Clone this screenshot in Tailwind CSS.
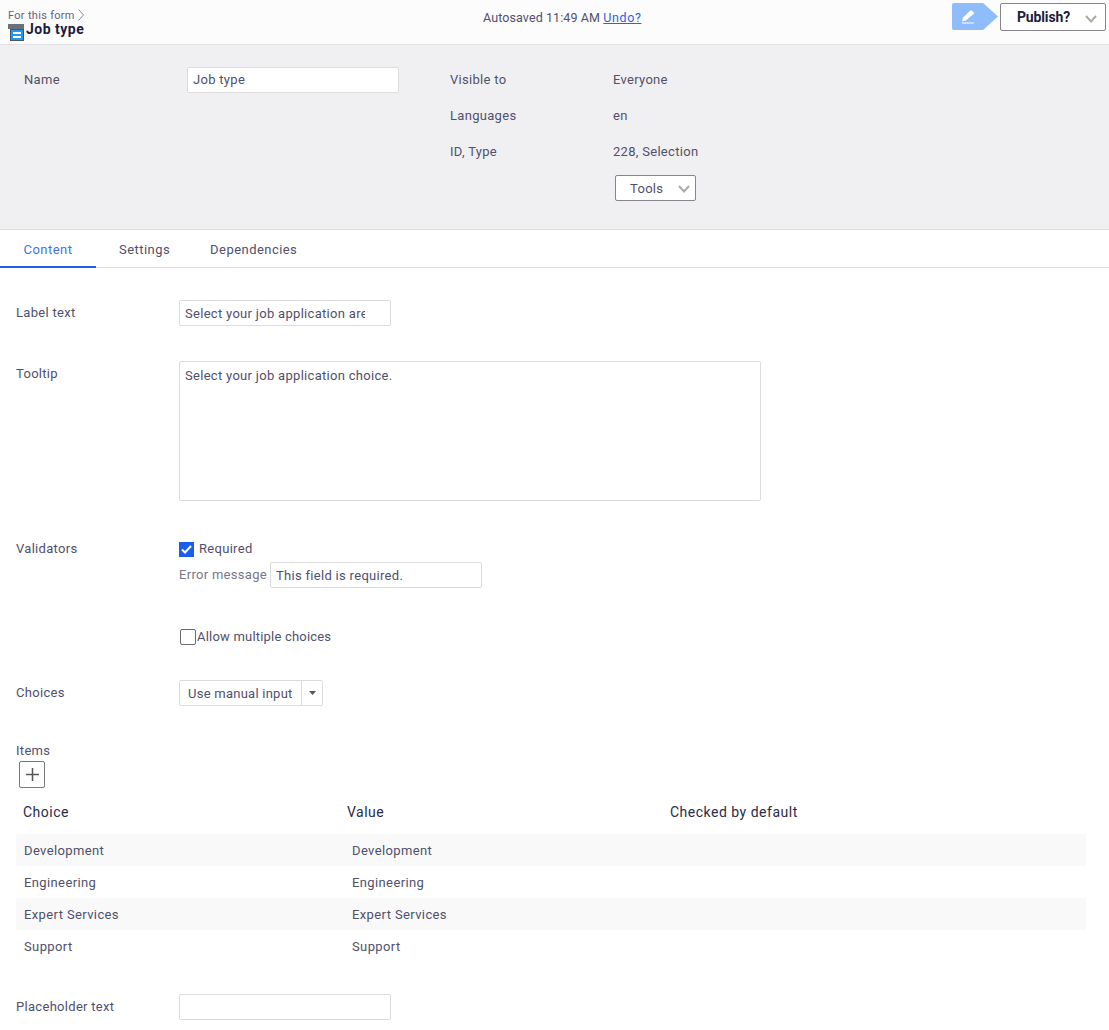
<!DOCTYPE html>
<html lang="en">
<head>
  <meta charset="UTF-8" />
  <title>Job type</title>
  <script src="https://cdn.jsdelivr.net/npm/@tailwindcss/browser@4"></script>
</head>
<body class="bg-white font-['Roboto',sans-serif] text-[13px] tracking-[0.3px] text-[#50506c] h-[1030px] overflow-hidden">

  <!-- top bar -->
  <div class="h-[45px] bg-[#fcfcfc] border-b border-[#e2e2e4] flex relative">
    <div class="pl-2 pt-[9px] w-[400px]">
      <div class="flex items-center h-[12px] text-[11px] text-[#63637a] leading-none">For this form
        <svg class="ml-[3px]" width="6" height="12" viewBox="0 0 6 12" fill="none" stroke="#8a8a96"><path d="M.5.5 5.500 6 .5 11.500"/></svg>
      </div>
      <div class="flex h-[19px] mt-[-1px]">
        <svg width="18" height="17" viewBox="0 0 18 17" class="mt-[4px] shrink-0">
          <rect x="0" y="0" width="16" height="5" fill="#6e7079"/>
          <rect x="2.500" y="5.500" width="13" height="11" fill="#2196f3" stroke="#4a5666"/>
          <rect x="5" y="8" width="8" height="2" fill="#fff"/>
          <rect x="5" y="12" width="8" height="2" fill="#fff"/>
        </svg>
        <span class="text-[14px] leading-[19px] font-bold text-[#1c1c3c] tracking-[0.5px]">Job type</span>
      </div>
    </div>
    <div class="absolute left-[483px] top-[10px] text-[12.5px] leading-[16px] tracking-[0.1px]">Autosaved 11:49 AM <a class="text-[#2b62e3] underline tracking-[0.6px]">Undo?</a></div>
    <div class="ml-auto flex items-start pt-[3px] pr-[3px]">
      <svg width="46" height="27" viewBox="0 0 46 27" class="mr-[2px]">
        <path d="M2 0H31L46 13.500 31 27H2a2 2 0 0 1-2-2V2a2 2 0 0 1 2-2Z" fill="#8fbcfb"/>
        <path d="M10 18.500l1-4 8-7.500 3.500 3-8.500 7.500Z" fill="#fff"/>
        <path d="M10 20H22" stroke="#fff" stroke-width="1"/>
      </svg>
      <div class="w-[106px] h-[28px] bg-white border border-[#85858b] rounded-[2px] flex items-center relative">
        <span class="ml-[16px] text-[14px] font-bold text-[#1c1c3c] tracking-[-0.15px]">Publish?</span>
        <svg class="absolute right-[8px] top-[11px]" width="12" height="8" viewBox="0 0 12 8" fill="none" stroke="#aaa" stroke-width="2"><path d="M1 1 6 6.500 11 1"/></svg>
      </div>
    </div>
  </div>

  <!-- properties -->
  <div class="h-[185px] bg-[#f0f0f2] border-b border-[#dedee0] relative flex">
    <div class="w-[450px] flex pl-[24px] pt-[22px]">
      <div class="w-[163px] h-[25px] leading-[25px]">Name</div>
      <div class="w-[212px] h-[26px] bg-white border border-[#dcdcdc] rounded-[2px] px-[5px] leading-[24px]">Job type</div>
    </div>
    <div class="pt-[17px]">
      <div class="flex h-[36px] items-center"><div class="w-[163px]">Visible to</div><div>Everyone</div></div>
      <div class="flex h-[36px] items-center"><div class="w-[163px]">Languages</div><div>en</div></div>
      <div class="flex h-[36px] items-center"><div class="w-[163px]">ID, Type</div><div>228, Selection</div></div>
      <div class="ml-[165px] mt-[5px] w-[81px] h-[26px] bg-white border border-[#85858b] rounded-[2px] flex items-center relative">
        <span class="ml-[14px] mt-[1px]">Tools</span>
        <svg class="absolute right-[5px] top-[9px]" width="12" height="8" viewBox="0 0 12 8" fill="none" stroke="#aaa" stroke-width="2"><path d="M1 1 6 6.500 11 1"/></svg>
      </div>
    </div>
  </div>

  <!-- tabs -->
  <div class="h-[38px] border-b border-[#dedee0] flex tracking-[0.45px]">
    <div class="w-[96px] h-[38px] border-b-2 border-[#1f5cf0] text-[#3f73ee] text-center leading-[39px]">Content</div>
    <div class="ml-[23px] leading-[39px]">Settings</div>
    <div class="ml-[40px] leading-[39px]">Dependencies</div>
  </div>

  <!-- form -->
  <div class="pl-[16px] pt-[32px]">
    <div class="flex h-[26px]">
      <div class="w-[163px] leading-[25px]">Label text</div>
      <div class="w-[212px] h-[26px] bg-white border border-[#dcdcdc] rounded-[2px] pl-[5px] pr-[25px] leading-[25px]">
        <div class="overflow-hidden whitespace-nowrap">Select your job application area</div>
      </div>
    </div>
    <div class="flex mt-[35px]">
      <div class="w-[163px] leading-[25px]">Tooltip</div>
      <div class="w-[582px] h-[140px] border border-[#dcdcdc] rounded-[2px] px-[5px] pt-[5px] leading-[18px]">Select your job application choice.</div>
    </div>
    <div class="flex mt-[38px]">
      <div class="w-[163px] leading-[20px]">Validators</div>
      <div>
        <div class="flex items-center h-[20px]">
          <div class="w-[15px] h-[15px] bg-[#1a5ef0] flex items-center justify-center">
            <svg width="11" height="9" viewBox="0 0 11 9" fill="none" stroke="#fff" stroke-width="2"><path d="M1 4.500 4 7.500 10 1"/></svg>
          </div>
          <span class="ml-[5px]">Required</span>
        </div>
        <div class="flex items-center mt-[3px] h-[26px]">
          <span class="text-[#77778a] w-[91px]">Error message</span>
          <div class="w-[212px] h-[26px] border border-[#dcdcdc] rounded-[2px] px-[5px] leading-[25px]">This field is required.</div>
        </div>
        <div class="flex items-center mt-[39px] h-[20px]">
          <div class="w-[16px] h-[16px] border border-[#6b6b70] rounded-[2px] ml-[1px]"></div>
          <span class="ml-[1px] tracking-[0.2px]">Allow multiple choices</span>
        </div>
      </div>
    </div>
    <div class="flex mt-[33px]">
      <div class="w-[163px] leading-[25px]">Choices</div>
      <div class="w-[144px] h-[26px] border border-[#dcdcdc] rounded-[2px] flex items-center">
        <span class="w-[122px] pl-[8px] h-full border-r border-[#dcdcdc] leading-[25px] tracking-[0.25px]">Use manual input</span>
        <svg class="ml-[7px]" width="7" height="4" viewBox="0 0 7 4"><path d="M0 0H7L3.500 4Z" fill="#555"/></svg>
      </div>
    </div>
    <div class="mt-[36px] leading-[18px]">Items</div>
    <div class="ml-[3px] mt-[1px] w-[26px] h-[27px] border border-[#77777c] rounded-[2px] flex items-center justify-center">
      <svg width="13" height="13" viewBox="0 0 13 13" stroke="#555" stroke-width="1.500"><path d="M6.500 0V13M0 6.500H13"/></svg>
    </div>
    <div class="flex mt-[15px] h-[18px] leading-[18px] text-[14px] text-[#2b2b4a] tracking-[0.5px] pl-[7px]">
      <div class="w-[324px]">Choice</div>
      <div class="w-[323px]">Value</div>
      <div>Checked by default</div>
    </div>
    <div class="w-[1070px] mt-[13px] tracking-[0.38px]">
      <div class="flex h-[32px] items-center pt-[1px] bg-[#f9f9f9] pl-[8px]"><div class="w-[328px]">Development</div><div>Development</div></div>
      <div class="flex h-[32px] items-center pt-[1px] pl-[8px]"><div class="w-[328px]">Engineering</div><div>Engineering</div></div>
      <div class="flex h-[32px] items-center pt-[1px] bg-[#f9f9f9] pl-[8px]"><div class="w-[328px]">Expert Services</div><div>Expert Services</div></div>
      <div class="flex h-[32px] items-center pt-[1px] pl-[8px]"><div class="w-[328px]">Support</div><div>Support</div></div>
    </div>
    <div class="flex mt-[32px]">
      <div class="w-[163px] leading-[25px]">Placeholder text</div>
      <div class="w-[212px] h-[26px] border border-[#dcdcdc] rounded-[2px]"></div>
    </div>
  </div>
</body>
</html>
